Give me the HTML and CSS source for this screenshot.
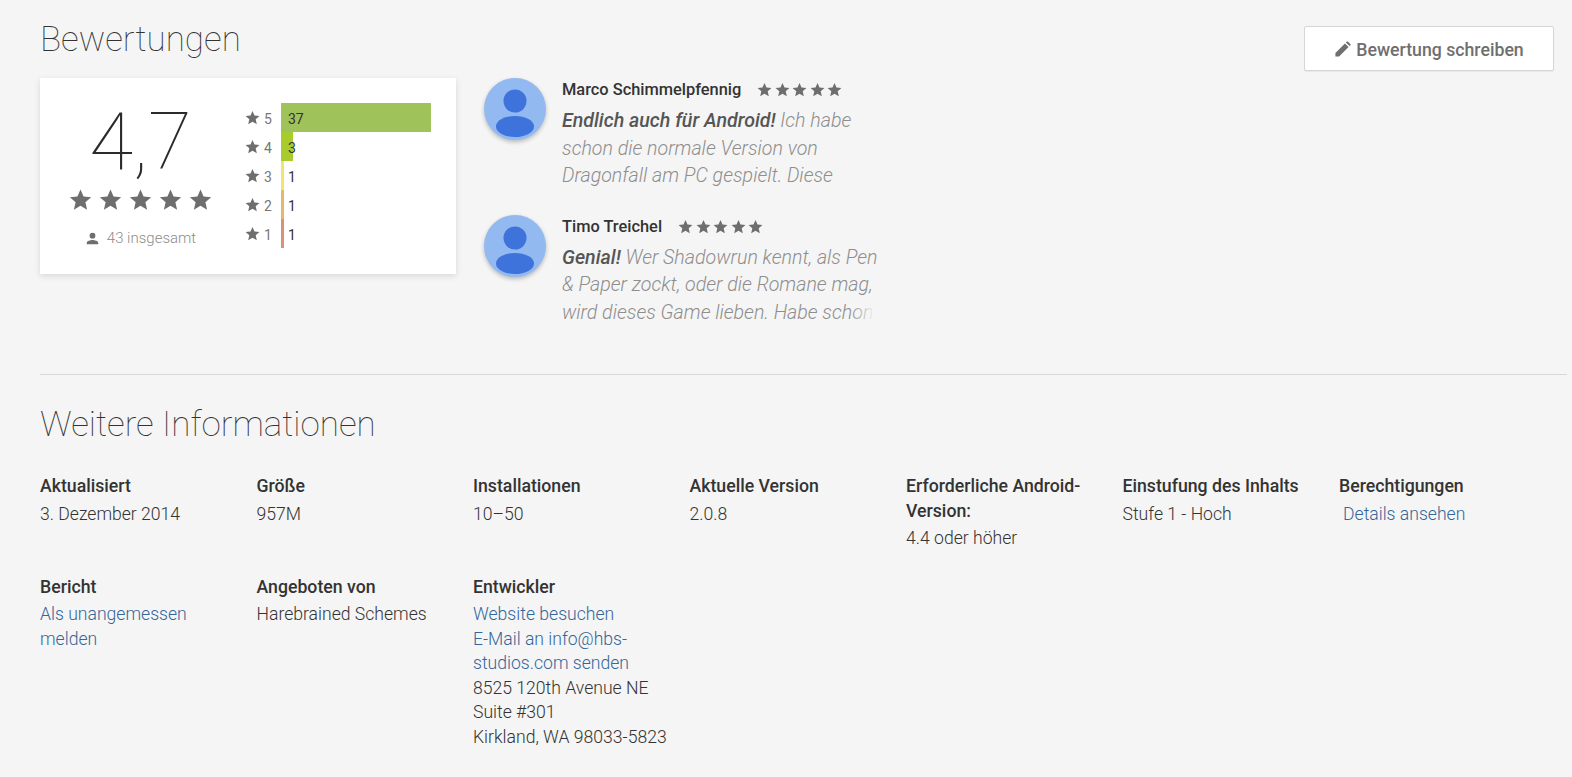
FILE: index.html
```html
<!DOCTYPE html>
<html lang="de">
  <head>
    <meta charset="UTF-8" />
    <title>Bewertungen</title>
    <link rel="stylesheet" href="styles.css">
  </head>
  <body>
    <svg class="defs" width="0" height="0">
      <symbol id="star" viewBox="0 0 24 24"><path d="M12 1.500l3.200 7.300 7.900.8-6 5.300 1.800 7.800-6.900-4.100-6.900 4.100 1.800-7.800-6-5.300 7.900-.8z"/></symbol>
    </svg>

    <section class="reviews">
      <div class="reviews-left">
        <h1 class="section-title">Bewertungen</h1>
        <div class="reviews-row">
          <div class="score-card">
            <div class="score">
              <div class="score-value">4,7</div>
              <div class="stars stars-big">
                <svg><use href="#star"/></svg><svg><use href="#star"/></svg><svg><use href="#star"/></svg><svg><use href="#star"/></svg><svg><use href="#star"/></svg>
              </div>
              <div class="score-total">
                <svg class="person" viewBox="0 0 24 24"><path d="M12 12a4.600 4.600 0 1 0 0-9.200a4.600 4.600 0 0 0 0 9.200zm0 2.300c-3.100 0-9.200 1.500-9.200 4.600v2.300h18.400v-2.300c0-3.100-6.100-4.600-9.200-4.600z"/></svg>
                43 insgesamt
              </div>
            </div>
            <div class="hist">
              <div class="hist-row">
                <svg class="hist-star"><use href="#star"/></svg><span class="hist-label">5</span>
                <div class="hist-bar c5" style="width: 150px">37</div>
              </div>
              <div class="hist-row">
                <svg class="hist-star"><use href="#star"/></svg><span class="hist-label">4</span>
                <div class="hist-bar c4" style="width: 12px">3</div>
              </div>
              <div class="hist-row">
                <svg class="hist-star"><use href="#star"/></svg><span class="hist-label">3</span>
                <div class="hist-bar c3" style="width: 3px">1</div>
              </div>
              <div class="hist-row">
                <svg class="hist-star"><use href="#star"/></svg><span class="hist-label">2</span>
                <div class="hist-bar c2" style="width: 3px">1</div>
              </div>
              <div class="hist-row">
                <svg class="hist-star"><use href="#star"/></svg><span class="hist-label">1</span>
                <div class="hist-bar c1" style="width: 3px">1</div>
              </div>
            </div>
          </div>

          <div class="review-list">
            <div class="review">
              <div class="avatar">
                <svg viewBox="0 0 62 62"><circle cx="31" cy="23" r="11.500"/><ellipse cx="31" cy="48.500" rx="19" ry="10.500"/></svg>
              </div>
              <div class="review-body">
                <div class="review-head">
                  <span class="review-name">Marco Schimmelpfennig</span>
                  <div class="stars stars-small">
                    <svg><use href="#star"/></svg><svg><use href="#star"/></svg><svg><use href="#star"/></svg><svg><use href="#star"/></svg><svg><use href="#star"/></svg>
                  </div>
                </div>
                <p class="review-text"><b>Endlich auch für Android!</b> Ich habe schon die normale Version von Dragonfall am PC gespielt. Diese</p>
                <div class="fade"></div>
              </div>
            </div>
            <div class="review">
              <div class="avatar">
                <svg viewBox="0 0 62 62"><circle cx="31" cy="23" r="11.500"/><ellipse cx="31" cy="48.500" rx="19" ry="10.500"/></svg>
              </div>
              <div class="review-body">
                <div class="review-head">
                  <span class="review-name">Timo Treichel</span>
                  <div class="stars stars-small">
                    <svg><use href="#star"/></svg><svg><use href="#star"/></svg><svg><use href="#star"/></svg><svg><use href="#star"/></svg><svg><use href="#star"/></svg>
                  </div>
                </div>
                <p class="review-text"><b>Genial!</b> Wer Shadowrun kennt, als Pen &amp; Paper zockt, oder die Romane mag, wird dieses Game lieben. Habe schon</p>
                <div class="fade"></div>
              </div>
            </div>
          </div>
        </div>
      </div>
      <button class="write-btn">
        <svg viewBox="0 0 24 24"><path d="M2 22v-5.200L15.400 3.400l5.200 5.200L7.200 22zM16.800 2l1-1a1.500 1.500 0 0 1 2.100 0l3.100 3.100a1.500 1.500 0 0 1 0 2.100l-1 1z"/></svg>
        Bewertung schreiben
      </button>
    </section>

    <section class="more-info">
      <h1 class="section-title">Weitere Informationen</h1>
      <div class="info-grid">
        <div class="info-item">
          <div class="info-title">Aktualisiert</div>
          <div class="info-content">3. Dezember 2014</div>
        </div>
        <div class="info-item">
          <div class="info-title">Größe</div>
          <div class="info-content">957M</div>
        </div>
        <div class="info-item">
          <div class="info-title">Installationen</div>
          <div class="info-content">10–50</div>
        </div>
        <div class="info-item">
          <div class="info-title">Aktuelle Version</div>
          <div class="info-content">2.0.8</div>
        </div>
        <div class="info-item">
          <div class="info-title">Erforderliche Android-Version:</div>
          <div class="info-content">4.4 oder höher</div>
        </div>
        <div class="info-item">
          <div class="info-title">Einstufung des Inhalts</div>
          <div class="info-content">Stufe 1 - Hoch</div>
        </div>
        <div class="info-item">
          <div class="info-title">Berechtigungen</div>
          <div class="info-content"><a class="link details" href="#">Details ansehen</a></div>
        </div>
        <div class="info-item">
          <div class="info-title">Bericht</div>
          <div class="info-content narrow"><a class="link" href="#">Als unangemessen melden</a></div>
        </div>
        <div class="info-item">
          <div class="info-title">Angeboten von</div>
          <div class="info-content">Harebrained Schemes</div>
        </div>
        <div class="info-item">
          <div class="info-title">Entwickler</div>
          <div class="info-content">
            <a class="link block" href="#">Website besuchen</a>
            <a class="link block narrow" href="#">E-Mail an info@hbs-studios.com senden</a>
            <div class="address">8525 120th Avenue NE<br>Suite #301<br>Kirkland, WA 98033-5823</div>
          </div>
        </div>
      </div>
    </section>
  </body>
</html>
```

FILE: styles.css
```css
body {
  margin: 0;
  background-color: #f5f5f5;
  color: #333;
  font-family: Roboto, "Liberation Sans", sans-serif;
  overflow: hidden;
}

.defs {
  position: absolute;
}

.section-title {
  margin: 0;
  font-size: 35px;
  line-height: 39px;
  font-weight: 100;
  color: #333;
}

.reviews {
  display: flex;
  justify-content: space-between;
  margin: 0 5px 0 40px;
  padding: 20px 0 50px;
  border-bottom: 1px solid #d9d9d9;
  height: 304px;
}

.reviews-row {
  display: flex;
  margin-top: 19px;
}

.score-card {
  display: flex;
  width: 416px;
  height: 196px;
  background-color: #fff;
  box-shadow: 0 2px 6px rgba(0, 0, 0, 0.12);
}

.score {
  width: 201px;
  padding-top: 24px;
  text-align: center;
}

.score-value {
  font-size: 80px;
  line-height: 80px;
  font-weight: 100;
  color: #2b2b2b;
}

.stars {
  display: flex;
  justify-content: center;
}

.stars svg {
  fill: #6e6e6e;
}

.stars-big {
  gap: 7px;
  margin-top: 6px;
}

.stars-big svg {
  width: 23px;
  height: 23px;
}

.score-total {
  display: flex;
  justify-content: center;
  align-items: center;
  gap: 7px;
  margin-top: 18px;
  font-size: 15px;
  font-weight: 300;
  color: #8c8c8c;
}

.person {
  width: 15px;
  height: 15px;
  fill: #6e6e6e;
}

.hist {
  padding-top: 25px;
}

.hist-row {
  display: flex;
  align-items: center;
  height: 29px;
  font-size: 14px;
}

.hist-star {
  width: 15px;
  height: 15px;
  margin: 0 0 0 4px;
  fill: #6e6e6e;
}

.hist-label {
  width: 21px;
  padding: 3px 0 0 4px;
  box-sizing: border-box;
  color: #777;
}

.hist-bar {
  height: 29px;
  line-height: 33px;
  text-indent: 7px;
  white-space: nowrap;
  color: #333;
}

.c5 { background-color: #9fc35a; }
.c4 { background-color: #a8cc2c; }
.c3 { background-color: #f2e56f; }
.c2 { background-color: #e3b868; }
.c1 { background-color: #d9917a; }

.review-list {
  margin-left: 28px;
  display: flex;
  flex-direction: column;
  gap: 25px;
}

.review {
  display: flex;
  width: 400px;
}

.avatar {
  width: 62px;
  height: 62px;
  border-radius: 50%;
  background-color: #93b9f1;
  box-shadow: 0 2px 4px rgba(0, 0, 0, 0.25);
  overflow: hidden;
  flex-shrink: 0;
}

.avatar svg {
  display: block;
  fill: #3f73dc;
}

.review-body {
  position: relative;
  width: 318px;
  margin-left: 16px;
}

.review-head {
  display: flex;
  align-items: center;
  gap: 16px;
  height: 23px;
}

.review-name {
  font-size: 16.400px;
  font-weight: 500;
  color: #333;
}

.stars-small {
  gap: 2.500px;
}

.stars-small svg {
  width: 15px;
  height: 15px;
}

.review-text {
  margin: 6px 0 0;
  font-size: 19.600px;
  line-height: 27.500px;
  font-weight: 300;
  font-style: italic;
  color: #8e8e8e;
}

.review-text b {
  font-weight: 500;
  color: #555;
}

.fade {
  position: absolute;
  right: 0;
  bottom: 0;
  width: 30px;
  height: 27px;
  background: linear-gradient(to right, rgba(245, 245, 245, 0), #f5f5f5 85%);
}

.write-btn {
  display: flex;
  align-items: center;
  justify-content: center;
  gap: 5px;
  width: 250px;
  height: 45px;
  margin: 6px 13px 0 0;
  padding-top: 3px;
  background-color: #fff;
  border: 1px solid #d6d6d6;
  border-radius: 2px;
  box-shadow: 0 1px 1px rgba(0, 0, 0, 0.06);
  font-family: inherit;
  font-size: 17.700px;
  font-weight: 500;
  color: #6f6f6f;
}

.write-btn svg {
  width: 17px;
  height: 17px;
  fill: #6f6f6f;
}

.more-info {
  margin-left: 40px;
  padding-top: 30px;
}

.info-grid {
  display: grid;
  grid-template-columns: repeat(7, 216.500px);
  grid-auto-rows: min-content;
  row-gap: 24px;
  margin-top: 30px;
}

.info-title {
  width: 190px;
  font-size: 17.700px;
  line-height: 24.500px;
  font-weight: 500;
  color: #333;
  margin-bottom: 3px;
}

.info-content {
  width: 200px;
  font-size: 17.600px;
  line-height: 24.500px;
  font-weight: 300;
  color: #333;
}

.info-content.narrow,
.link.narrow {
  width: 170px;
}

.link {
  color: #33669a;
  text-decoration: none;
}

.block {
  display: block;
}

.details {
  margin-left: 4px;
}
```
